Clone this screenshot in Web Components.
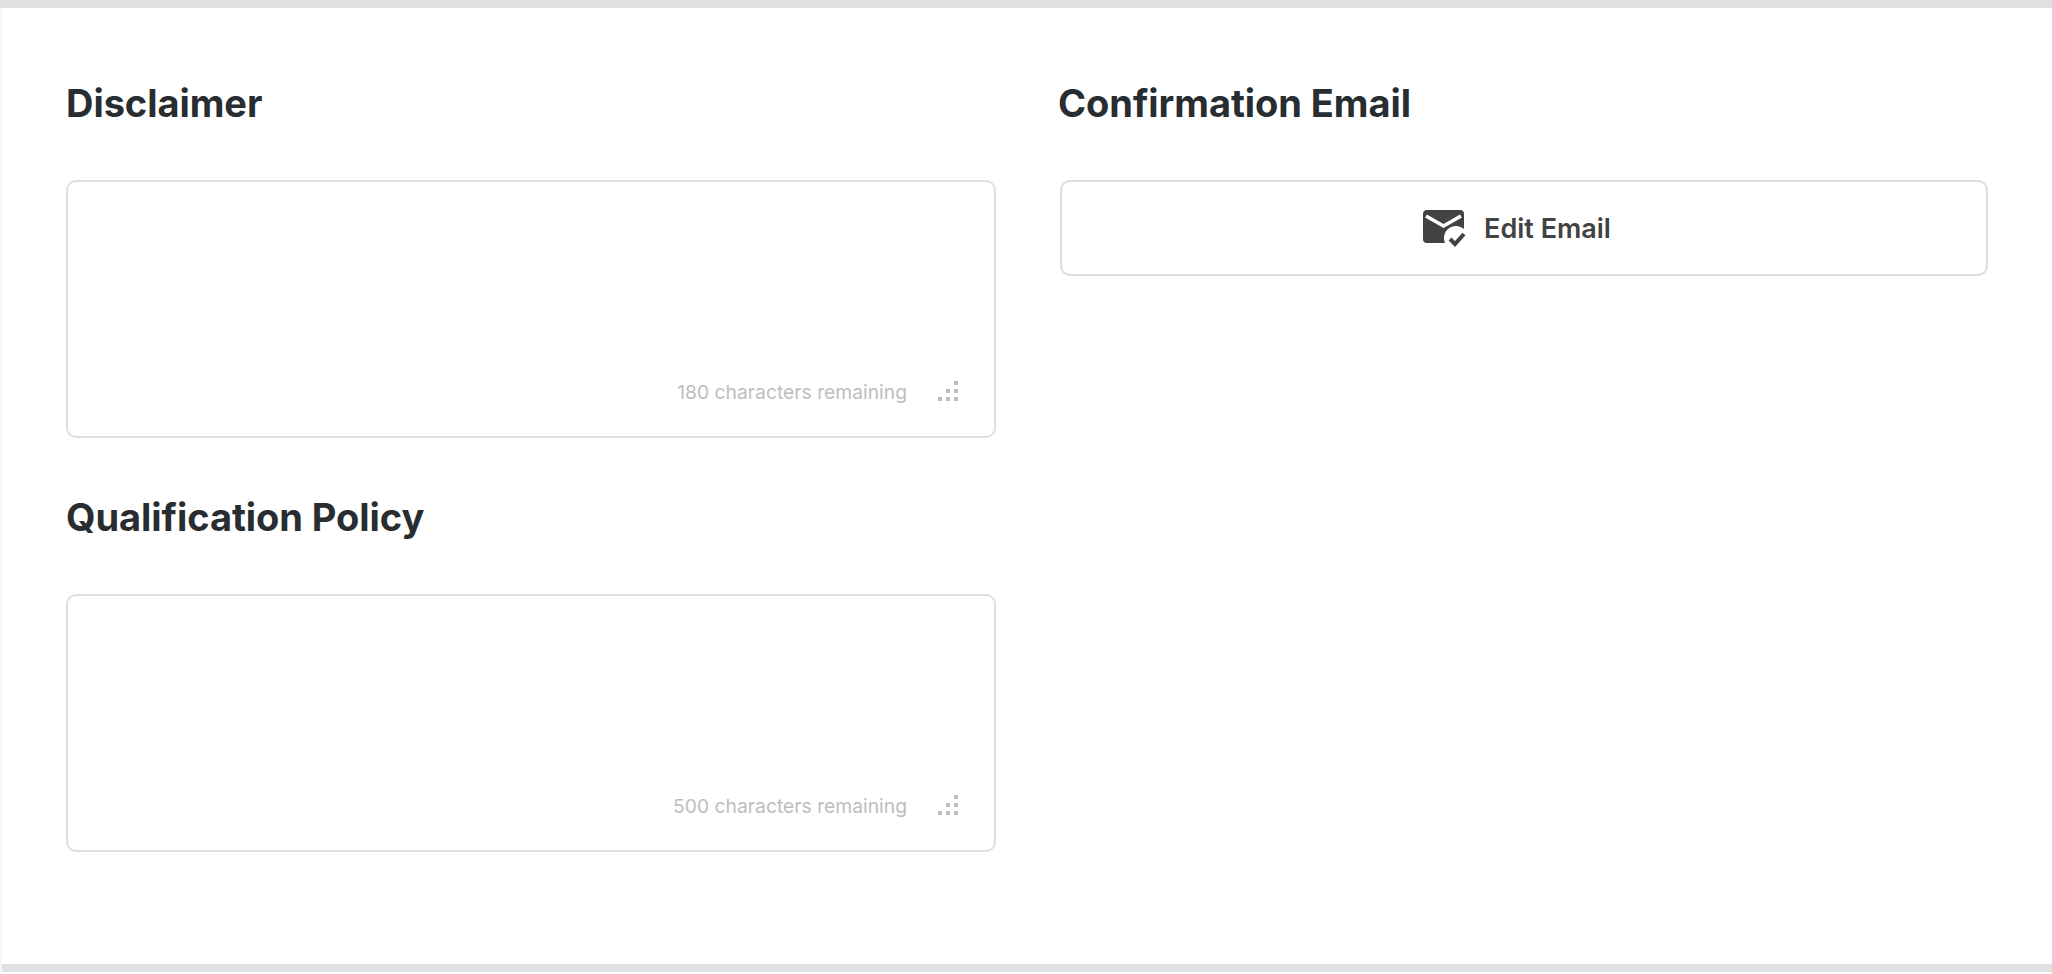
<!DOCTYPE html>
<html lang="en">
<head>
<meta charset="utf-8">
<title>Settings</title>
<style>
	html, body { margin: 0; height: 100%; background: #fff; }
	body { font-family: "Inter", "Liberation Sans", sans-serif; overflow: hidden; }
</style>
</head>
<body>
<settings-page>
	<text-section slot="left" heading="Disclaimer" remaining="180 characters remaining"></text-section>
	<text-section slot="left" heading="Qualification Policy" remaining="500 characters remaining"></text-section>
	<email-section slot="right" heading="Confirmation Email" label="Edit Email"></email-section>
</settings-page>

<script>
class SettingsPage extends HTMLElement {
	constructor() {
		super();
		this.attachShadow({mode:'open'});
		this.shadowRoot.innerHTML = `
			<style>
			:host {
				background: #f6f6fc;
				box-sizing: border-box;
				display: block;
				height: 974px;
				width: 2052px;
			}
			.top { background: #e0e0e0; height: 8px; }
			.body {
				background: #fff;
				box-sizing: border-box;
				column-gap: 62px;
				display: grid;
				grid-template-columns: 930px 930px;
				height: 956px;
				margin-left: 2px;
				padding: 71px 64px 0;
			}
			.bottom { background: #e0e0e0; height: 8px; margin-left: 2px; }
			.end { background: #fff; height: 2px; margin-left: 2px; }
			</style>
			<div class="top"></div>
			<div class="body">
				<div><slot name="left"></slot></div>
				<div><slot name="right"></slot></div>
			</div>
			<div class="bottom"></div>
			<div class="end"></div>
		`;
	}
}

class TextSection extends HTMLElement {
	constructor() {
		super();
		this.attachShadow({mode:'open'});
		this.shadowRoot.innerHTML = `
			<style>
			:host { display: block; margin-bottom: 55px; }
			h2 {
				color: #272d30;
				font: 700 38px/48px "Inter", "Liberation Sans", sans-serif;
				letter-spacing: -0.05px;
				margin: 0 0 53px;
			}
			.box {
				border: 2px solid #e0e0e0;
				border-radius: 10px;
				box-sizing: border-box;
				display: flex;
				align-items: flex-end;
				height: 258px;
				justify-content: flex-end;
				padding: 0 36px 32px 0;
			}
			.count {
				color: #bdbdbd;
				font: 400 19.3px/24px "Inter", "Liberation Sans", sans-serif;
				margin-right: 31px;
			}
			svg { display: block; margin-bottom: 3px; }
			</style>
			<h2></h2>
			<div class="box">
				<span class="count"></span>
				<svg width="20" height="20" viewBox="0 0 20 20" fill="#bdbdbd">
					<rect x="16" y="0" width="4" height="4"/>
					<rect x="8" y="8" width="4" height="4"/>
					<rect x="16" y="8" width="4" height="4"/>
					<rect x="0" y="16" width="4" height="4"/>
					<rect x="8" y="16" width="4" height="4"/>
					<rect x="16" y="16" width="4" height="4"/>
				</svg>
			</div>
		`;
		this.shadowRoot.querySelector('h2').textContent = this.getAttribute('heading');
		this.shadowRoot.querySelector('.count').textContent = this.getAttribute('remaining');
	}
}

class EmailSection extends HTMLElement {
	constructor() {
		super();
		this.attachShadow({mode:'open'});
		this.shadowRoot.innerHTML = `
			<style>
			:host { display: block; }
			h2 {
				color: #272d30;
				font: 700 38px/48px "Inter", "Liberation Sans", sans-serif;
				letter-spacing: -0.05px;
				margin: 0 0 53px;
			}
			.btn {
				align-items: center;
				border: 2px solid #dcdcdc;
				border-radius: 10px;
				box-sizing: border-box;
				color: #424242;
				display: flex;
				font: 600 27px/32px "Inter", "Liberation Sans", sans-serif;
				gap: 18px;
				height: 96px;
				justify-content: center;
				margin-left: 2px;
				padding: 2px 15px 0 0;
			}
			svg { display: block; }
			</style>
			<h2></h2>
			<div class="btn">
				<svg width="44" height="40" viewBox="0 0 44 40">
					<rect x="1" y="1" width="41" height="33" rx="4" fill="#424242"/>
					<path d="M4 7 L21.5 17 L39 7" fill="none" stroke="#fff" stroke-width="3.6"/>
					<circle cx="34" cy="29" r="12" fill="#fff"/>
					<path d="M28 30 L33 35 L42 25" fill="none" stroke="#424242" stroke-width="4"/>
				</svg>
				<span class="label"></span>
			</div>
		`;
		this.shadowRoot.querySelector('h2').textContent = this.getAttribute('heading');
		this.shadowRoot.querySelector('.label').textContent = this.getAttribute('label');
	}
}

customElements.define('settings-page', SettingsPage);
customElements.define('text-section', TextSection);
customElements.define('email-section', EmailSection);
</script>
</body>
</html>
